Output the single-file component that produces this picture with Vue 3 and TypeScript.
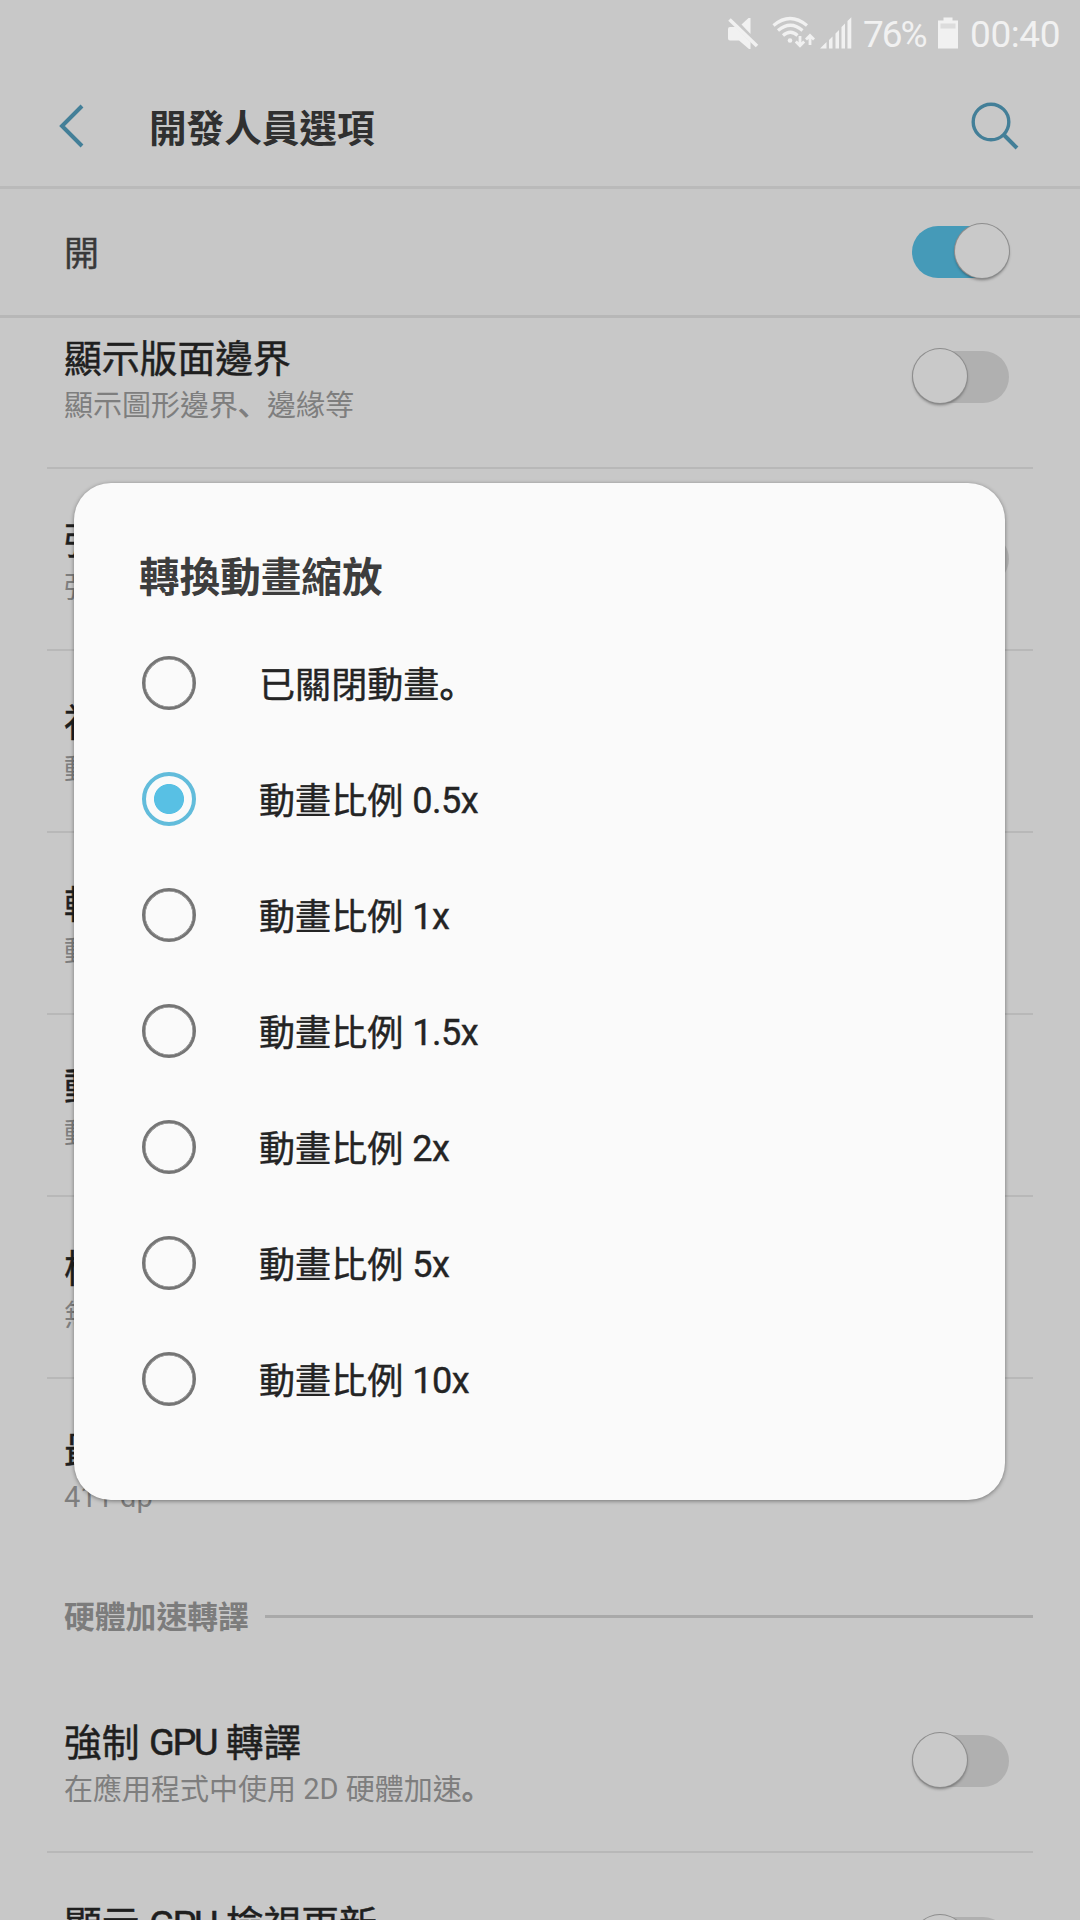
<script setup lang="ts">
import { ref } from 'vue'

interface Run { text: string; kind: 'han' | 'latin' | 'punct'; lang: string }
interface Setting { title: string; summary: string; toggle?: boolean; divider?: boolean }

// Splits a label into Han, Latin and punctuation runs so each gets its own metrics.
// Punctuation is tagged zh-Hans so it sits in the lower left corner of its cell.
function runs(text: string): Run[] {
  const parts = text.match(/[、。]|[\x21-\x7e]+|[^\x21-\x7e、。]+/g) ?? []
  return parts.map((part) => {
    const kind = /[、。]/.test(part) ? 'punct' : /[\x21-\x7e]/.test(part) ? 'latin' : 'han'
    return { text: part, kind, lang: kind === 'punct' ? 'zh-Hans' : 'zh-Hant' }
  })
}

const drawing: Setting[] = [
  { title: '顯示版面邊界', summary: '顯示圖形邊界、邊緣等', toggle: true, divider: true },
  { title: '強制使用從右至左', summary: '強制使用從右至左的版面方向', toggle: true, divider: true },
  { title: '視窗動畫縮放', summary: '動畫比例 0.5x', divider: true },
  { title: '轉換動畫縮放', summary: '動畫比例 0.5x', divider: true },
  { title: '動畫程式時間長度比例', summary: '動畫比例 0.5x', divider: true },
  { title: '模擬次要顯示器', summary: '無', divider: true },
  { title: '最小寬度', summary: '411 dp' },
]
const hardware: Setting[] = [
  { title: '強制 GPU 轉譯', summary: '在應用程式中使用 2D 硬體加速。', toggle: true, divider: true },
  { title: '顯示 GPU 檢視更新', summary: '', toggle: true, divider: true },
]
const groups = [
  { heading: '', items: drawing },
  { heading: '硬體加速轉譯', items: hardware },
]

const options = [
  '已關閉動畫。',
  '動畫比例 0.5x',
  '動畫比例 1x',
  '動畫比例 1.5x',
  '動畫比例 2x',
  '動畫比例 5x',
  '動畫比例 10x',
]
const selected = ref(1)
</script>

<template>
  <div class="screen" lang="zh-Hant">
    <div class="status">
      <svg class="mute" width="32" height="34" viewBox="0 0 32 34">
        <path d="M3 11h5.5L23.500 26V33h-1.500L12 24.500H3q-2 0-2-2V13q0-2 2-2z" fill="#f1f1f1" />
        <path d="M14.500 8.500L21.500 2h2v16z" fill="#f1f1f1" />
        <path d="M2.500 3.500L30 30" stroke="#f1f1f1" stroke-width="3.600" />
      </svg>
      <svg class="wifi" width="43" height="34" viewBox="0 0 43 34">
        <g fill="none" stroke="#f1f1f1" stroke-width="3.200">
          <path d="M1.500 9.500Q18 -4.500 35 9.500" />
          <path d="M6 14.500Q18.500 4 30.500 14.500" />
          <path d="M11 19.500Q18.500 13 25.500 19.500" />
          <path d="M28 20v9M23.800 25.500l4.200 4.200 4.200-4.200M38 29V20M34 23.500l4-4 4 4" stroke-width="2.800" />
        </g>
        <circle cx="18" cy="24.500" r="2.300" fill="#f1f1f1" />
      </svg>
      <svg class="signal" width="32" height="34" viewBox="0 0 32 34" fill="#f1f1f1">
        <path d="M0 32.500L6.500 26v6.500zM9 24l3.500-3.500v12H9zM15.500 17.500L19 14v18.500h-3.500zM21.500 11L25 7.500v25h-3.500zM27.500 5L31.300 1.200v31.300h-3.800z" />
      </svg>
      <span class="percent">76%</span>
      <svg class="battery" width="22" height="34" viewBox="0 0 22 34">
        <path d="M6.500 1.500h9v3H21v28H1v-28h5.500z" fill="#f1f1f1" />
        <rect x="3.500" y="7.500" width="15" height="5" fill="#dcdcdc" />
      </svg>
      <span class="clock">00:40</span>
    </div>

    <header class="appbar">
      <svg class="back" width="26" height="44" viewBox="0 0 26 44">
        <path d="M23 2L3 22L23 42" fill="none" stroke="#437f98" stroke-width="4" />
      </svg>
      <h1>開發人員選項</h1>
      <svg class="search" width="50" height="50" viewBox="0 0 50 50" fill="none" stroke="#437f98">
        <circle cx="21" cy="21" r="17.800" stroke-width="3.400" />
        <path d="M33.500 33.500L47 47" stroke-width="4" />
      </svg>
    </header>

    <div class="master">
      <span>開</span>
      <i class="switch on"><b></b></i>
    </div>

    <main class="list">
      <div class="scroll">
        <section v-for="group in groups" :key="group.heading">
          <h2 v-if="group.heading"><span>{{ group.heading }}</span><i></i></h2>
          <div v-for="item in group.items" :key="item.title" class="row" :class="{ divided: item.divider }">
            <div class="copy">
              <div class="title"><span v-for="(r, i) in runs(item.title)" :key="i" :class="r.kind" :lang="r.lang">{{ r.text }}</span></div>
              <div class="summary"><span v-for="(r, i) in runs(item.summary)" :key="i" :class="r.kind" :lang="r.lang">{{ r.text }}</span></div>
            </div>
            <i v-if="item.toggle" class="switch"><b></b></i>
          </div>
        </section>
      </div>
    </main>

    <div class="dialog" role="dialog">
      <h3>轉換動畫縮放</h3>
      <div v-for="(option, index) in options" :key="option" class="option" @click="selected = index">
        <i class="radio" :class="{ checked: index === selected }"></i>
        <div class="label"><span v-for="(r, i) in runs(option)" :key="i" :class="r.kind" :lang="r.lang">{{ r.text }}</span></div>
      </div>
    </div>
  </div>
</template>

<style>
body { margin: 0; background: #c8c8c8; }
</style>

<style scoped>
.screen {
  position: relative;
  display: flex;
  flex-direction: column;
  width: 1080px;
  height: 1920px;
  overflow: hidden;
  background: #c8c8c8;
  color: #1f1f1f;
  font-family: Roboto, "Noto Sans CJK TC", sans-serif;
}
h1, h2, h3 { margin: 0; }
.status {
  display: flex;
  flex: none;
  box-sizing: border-box;
  height: 66px;
  padding: 16px 18px 0 0;
  justify-content: flex-end;
  color: #f1f1f1;
  font-size: 37px;
  line-height: 38px;
  white-space: nowrap;
}
.wifi { margin-left: 13px; }
.signal { margin-left: 5px; }
.percent { width: 65px; margin-left: 11px; letter-spacing: -2px; }
.battery { margin-left: 9px; margin-right: 1px; }
.clock { width: 92px; margin-left: 10px; letter-spacing: -0.4px; }
.appbar {
  display: flex;
  flex: none;
  align-items: center;
  height: 120px;
  border-bottom: 3px solid #bababa;
}
.back { margin-left: 59px; }
h1 { flex: 1; margin-left: 64px; padding-top: 5px; color: #303030; font-size: 37.6px; line-height: 48px; }
.search { margin-right: 60px; }
.master {
  display: flex;
  flex: none;
  align-items: center;
  justify-content: space-between;
  height: 126px;
  padding: 0 71px 0 64px;
  border-bottom: 3px solid #b7b7b7;
  background: #c7c7c7;
  color: #393939;
  font-size: 35px;
}
.master span { padding-top: 6px; line-height: 48px; -webkit-text-stroke: 0.4px; }
.switch {
  display: block;
  flex: none;
  width: 97px;
  height: 52px;
  border-radius: 26px;
  background: #b0b0b0;
}
.switch b {
  display: block;
  width: 54px;
  height: 54px;
  margin: -2px 0 0 1px;
  border-radius: 50%;
  background: #c9c9c9;
  box-shadow: 0 0 0 1px #8d8d8d, 0 2px 3px rgba(0, 0, 0, .4);
}
.switch.on { background: #459ab8; }
.switch.on b { margin-left: 43px; }
.list { flex: 1; min-height: 0; overflow: hidden; }
.scroll { margin-top: -31px; }
.row {
  display: flex;
  align-items: center;
  justify-content: space-between;
  height: 180px;
  margin: 0 47px;
  padding: 0 24px 0 17px;
}
.row.divided { border-bottom: 2px solid #b8b8b8; }
.copy { height: 82px; white-space: nowrap; }
.title { height: 48px; font-size: 37.8px; line-height: 46px; -webkit-text-stroke: 0.5px; }
.summary { height: 40px; margin-top: 2px; color: #7e7e7e; font-size: 29px; line-height: 41px; }
.title .latin { letter-spacing: -0.06em; }
.punct { font-family: "Noto Sans CJK SC", sans-serif; line-height: 1; -webkit-text-stroke: 0.9px; }
.latin { line-height: 1; vertical-align: 1px; }
.han, .latin { white-space: pre; }
h2 {
  display: flex;
  align-items: center;
  height: 112px;
  padding: 0 47px 0 64px;
  color: #7c7c7c;
  font-size: 30.8px;
  line-height: 40px;
}
h2 span { width: 187px; padding-top: 5px; white-space: nowrap; }
h2 i { flex: 1; height: 3px; margin: 3px 0 0 14px; background: #a9a9a9; }
.dialog {
  position: absolute;
  left: 74px;
  top: 483px;
  box-sizing: border-box;
  width: 931px;
  height: 1017px;
  padding-top: 70px;
  border-radius: 37px;
  background: #fafafa;
  box-shadow: 0 1px 4px rgba(0, 0, 0, .42);
}
h3 { margin: 0 0 22px 65px; color: #3d3d3d; font-size: 40.6px; line-height: 50px; }
.option { display: flex; align-items: center; height: 116px; padding-left: 68px; }
.radio {
  box-sizing: border-box;
  width: 54px;
  height: 54px;
  border: 3px solid #757575;
  border-radius: 50%;
  box-shadow: inset 0 0 0 0.5px #757575;
}
.radio.checked {
  border: 4px solid #62bcdb;
  background: radial-gradient(circle, #58c0e4 14.6px, transparent 15.4px);
  box-shadow: none;
}
.label {
  margin-left: 63px;
  padding-top: 6px;
  color: #242424;
  font-size: 36.1px;
  line-height: 48px;
  white-space: nowrap;
  -webkit-text-stroke: 0.4px;
}
.label .latin { letter-spacing: -0.015em; }
</style>
